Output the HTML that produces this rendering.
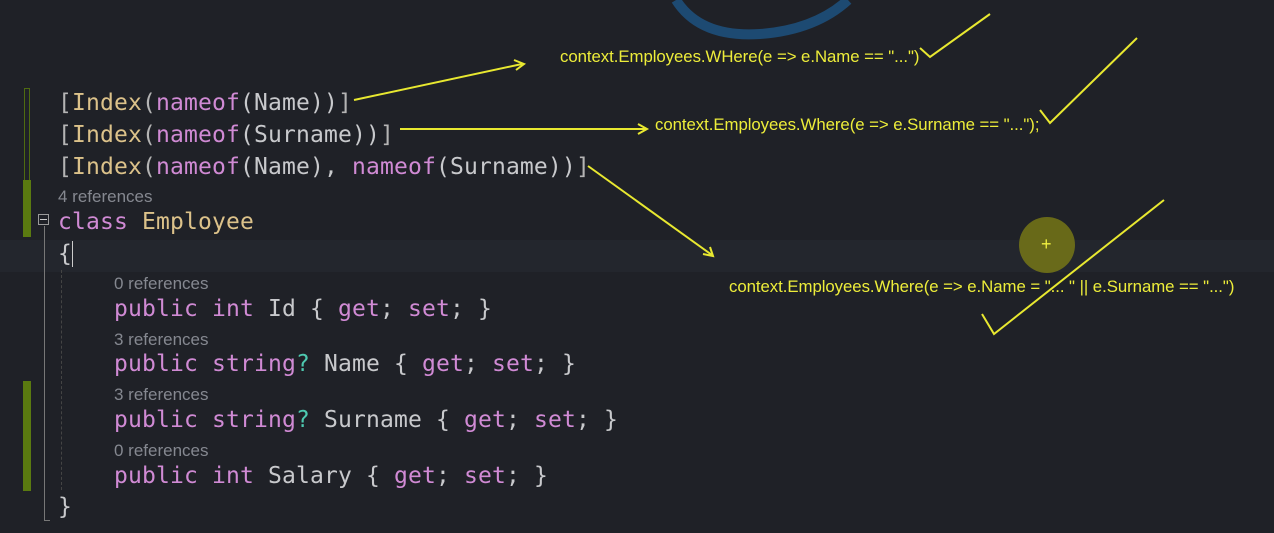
<!DOCTYPE html><html><head><style>
body{margin:0;width:1274px;height:533px;background:#1f2127;overflow:hidden;position:relative;font-family:"DejaVu Sans Mono","Liberation Mono",monospace}
.l{position:absolute;left:58px;font-size:23px;line-height:28px;white-space:pre;color:#c8c9cc;letter-spacing:0.15px}
.r{position:absolute;left:58px;font-family:"Liberation Sans",sans-serif;font-size:17px;color:#858890;line-height:20px}
.b{color:#b4b4b4}.y{color:#dcc28a}.p{color:#d08ad4}.t{color:#4ec9b0}
.a{position:absolute;font-family:"Liberation Sans",sans-serif;font-size:16.8px;color:#eded3a;white-space:pre;letter-spacing:-0.05px}
</style></head><body>
<div style="position:absolute;left:0;top:240px;width:1274px;height:32px;background:#23262d"></div>
<div style="position:absolute;left:24px;top:88px;width:4px;height:92px;border:1px solid #4e6a10"></div>
<div style="position:absolute;left:23px;top:180px;width:8px;height:57px;background:#5a7a10"></div>
<div style="position:absolute;left:23px;top:381px;width:8px;height:110px;background:#5a7a10"></div>
<div style="position:absolute;left:38px;top:214px;width:11px;height:11px;border:1px solid #9a9a9a;box-sizing:border-box"></div>
<div style="position:absolute;left:40px;top:219px;width:7px;height:1px;background:#ccc"></div>
<div style="position:absolute;left:44px;top:226px;width:1px;height:295px;background:#777"></div>
<div style="position:absolute;left:44px;top:520px;width:6px;height:1px;background:#777"></div>
<div style="position:absolute;left:61px;top:270px;width:0;height:220px;border-left:1px dashed #444"></div>
<div class="l" style="top:89px"><span class="b">[</span><span class="y">Index</span><span class="b">(</span><span class="p">nameof</span>(Name))<span class="b">]</span></div>
<div class="l" style="top:121px"><span class="b">[</span><span class="y">Index</span><span class="b">(</span><span class="p">nameof</span>(Surname))<span class="b">]</span></div>
<div class="l" style="top:153px"><span class="b">[</span><span class="y">Index</span><span class="b">(</span><span class="p">nameof</span>(Name), <span class="p">nameof</span>(Surname))<span class="b">]</span></div>
<div class="r" style="top:187px">4 references</div>
<div class="l" style="top:208px"><span class="p">class</span> <span class="y">Employee</span></div>
<div class="l" style="top:240px">{<span style="border-left:1px solid #ccc"></span></div>
<div class="r" style="top:274px;left:114px">0 references</div>
<div class="l" style="top:295px;left:114px"><span class="p">public int</span> Id { <span class="p">get</span>; <span class="p">set</span>; }</div>
<div class="r" style="top:330px;left:114px">3 references</div>
<div class="l" style="top:350px;left:114px"><span class="p">public string</span><span class="t">?</span> Name { <span class="p">get</span>; <span class="p">set</span>; }</div>
<div class="r" style="top:385px;left:114px">3 references</div>
<div class="l" style="top:406px;left:114px"><span class="p">public string</span><span class="t">?</span> Surname { <span class="p">get</span>; <span class="p">set</span>; }</div>
<div class="r" style="top:441px;left:114px">0 references</div>
<div class="l" style="top:462px;left:114px"><span class="p">public int</span> Salary { <span class="p">get</span>; <span class="p">set</span>; }</div>
<div class="l" style="top:493px">}</div>
<div class="a" style="left:560px;top:47px">context.Employees.WHere(e =&gt; e.Name == "...")</div>
<div class="a" style="left:655px;top:115px">context.Employees.Where(e =&gt; e.Surname == "...");</div>
<div class="a" style="left:729px;top:277px">context.Employees.Where(e =&gt; e.Name = "... " || e.Surname == "...")</div>
<div style="position:absolute;left:1019px;top:217px;width:56px;height:56px;border-radius:50%;background:rgba(130,130,20,0.75)"></div>
<div style="position:absolute;left:1041px;top:234px;color:#f0f040;font:18px 'Liberation Sans'">+</div>
<svg width="1274" height="533" style="position:absolute;left:0;top:0" fill="none" stroke="#e8e830" stroke-width="2">
<path d="M676 0 Q700 38 760 34 Q815 30 848 0" stroke="#1d4a72" stroke-width="10"/>
<path d="M354 100 L522 64"/><path d="M514 60 L524 64 L516 70"/>
<path d="M400 129 L646 129"/><path d="M638 124 L647 129 L638 134"/>
<path d="M588 166 L712 255"/><path d="M703 254 L713 256 L710 247"/>
<path d="M920 48 L930 57 L990 14"/>
<path d="M1040 110 L1050 123 L1137 38"/>
<path d="M982 314 L994 334 L1164 200"/>
</svg>
</body></html>
